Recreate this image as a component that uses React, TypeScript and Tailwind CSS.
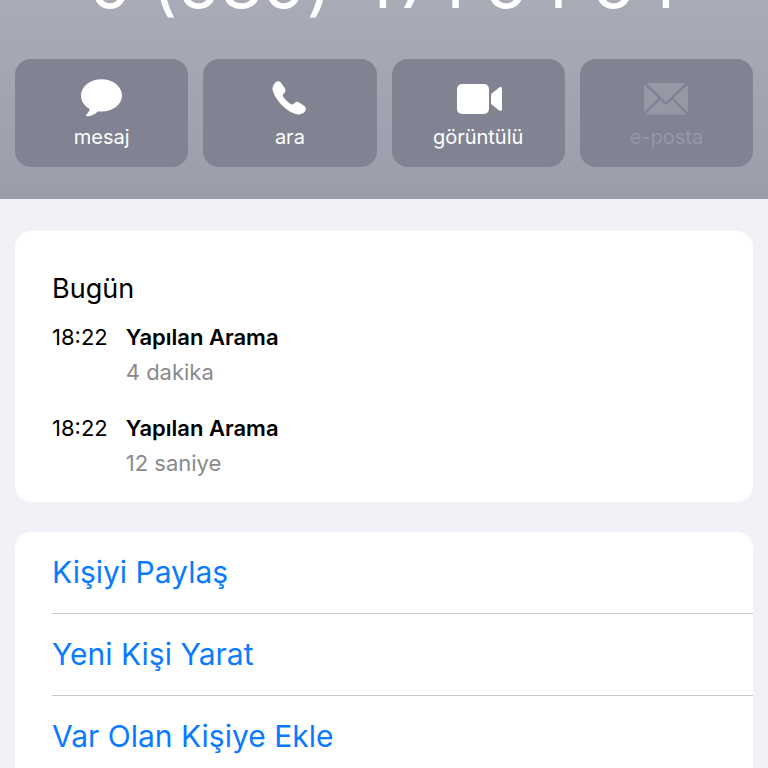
import type { ReactNode } from "react";

type Action = { label: string; icon: ReactNode; disabled?: boolean };

const actions: Action[] = [
  {
    label: "mesaj",
    icon: (
      <svg className="w-12 h-10" viewBox="0 0 48 40" fill="currentColor" aria-hidden="true">
        <path d="M23.500.300C12 .300 3 7.500 3 16.600c0 5.600 3.200 10.400 8.600 13.400-.3 2-1.300 3.500-2.900 5.200-.9.900-.5 2.100.9 2.100 3.200 0 7-1.900 9.700-4.300.4-.4.700-.4 1.200-.4h3C35 32.600 44 25.600 44 16.600S35 .300 23.500.300z" />
      </svg>
    ),
  },
  {
    label: "ara",
    icon: (
      <svg className="w-12 h-10" viewBox="0 0 48 40" fill="currentColor" aria-hidden="true">
        <path d="M8.800 4.200C10.800 1.700 13.500 1.700 15.200 4.100l3.500 5c1.200 1.800 1 3.300-.3 4.800l-1.200 1.400c-.6.700-.6 1.300-.1 2.100 1 1.500 2.200 2.900 3.600 4.300s2.800 2.600 4.400 3.500c.8.500 1.400.5 2.100-.1l1.400-1.200c1.500-1.300 3-1.500 4.700-.3l4.900 3.400c2.300 1.600 2.400 4.100.1 6.300-2.400 2.300-5.700 2.700-9.500 1.400-4.800-1.700-9.300-4.900-13.100-8.700S8.900 17.700 7.200 13c-1.300-3.600-.6-6.300 1.600-8.800z" />
      </svg>
    ),
  },
  {
    label: "görüntülü",
    icon: (
      <svg className="w-12 h-10" viewBox="0 0 48 40" fill="currentColor" aria-hidden="true">
        <rect x="3" y="5" width="32" height="30" rx="5" />
        <path d="M37 16.500c0-1 .3-1.700 1-2.300l7.200-5.700c1.300-1 2.800-.4 2.800 1.200v20.600c0 1.600-1.500 2.200-2.800 1.200L38 25.800c-.7-.6-1-1.300-1-2.300z" />
      </svg>
    ),
  },
  {
    label: "e-posta",
    disabled: true,
    icon: (
      <svg className="w-12 h-10" viewBox="0 0 48 40" fill="currentColor" aria-hidden="true">
        <path d="M4.500 4h39L25.300 22c-.8.800-1.800.8-2.600 0z" />
        <path d="M2 5.500 16.500 19.300 2 33.500zM46 5.500 31.500 19.300 46 33.500z" />
        <path d="M18 20.800l3.300 3.200c1.700 1.600 3.700 1.600 5.400 0l3.300-3.200L44.500 35.500h-41z" />
      </svg>
    ),
  },
];

const calls = [
  { time: "18:22", type: "Yapılan Arama", duration: "4 dakika" },
  { time: "18:22", type: "Yapılan Arama", duration: "12 saniye" },
];

const links = ["Kişiyi Paylaş", "Yeni Kişi Yarat", "Var Olan Kişiye Ekle"];

export default function App() {
  return (
    <div className="min-h-screen overflow-hidden bg-[#f2f1f7] font-['Inter','Liberation_Sans',sans-serif] text-black">
      {/* Contact header */}
      <header className="overflow-hidden bg-linear-to-b from-[#a9abb6] to-[#9b9dab] px-[15px] pb-8">
        <h1 className="-mt-[53px] mb-10 text-center text-[70px] leading-[72px] whitespace-nowrap text-white [font-feature-settings:'calt'_0]">
          0 (539) 471 54 54
        </h1>

        <div className="grid grid-cols-4 gap-[15px]">
          {actions.map((action) => (
            <button
              key={action.label}
              type="button"
              disabled={action.disabled}
              className="flex h-[108px] flex-col items-center gap-1 rounded-2xl bg-[#818393] pt-5 text-white disabled:text-[#9698a6]"
            >
              {action.icon}
              <span className="text-xl leading-7">{action.label}</span>
            </button>
          ))}
        </div>
      </header>

      <main className="flex flex-col gap-[30px] px-[15px] pt-8">
        {/* Recent calls */}
        <section className="rounded-2xl bg-white px-[37px] pt-10 pb-[21px]">
          <h2 className="text-[27px] leading-9">Bugün</h2>
          <ul className="mt-[13px] flex flex-col gap-[21px]">
            {calls.map((call) => (
              <li key={call.duration} className="flex gap-[18px] text-[22px] leading-[35px]">
                <time>{call.time}</time>
                <div>
                  <p className="font-semibold">{call.type}</p>
                  <p className="text-[#8a8a8e]">{call.duration}</p>
                </div>
              </li>
            ))}
          </ul>
        </section>

        {/* Contact actions */}
        <nav className="divide-y divide-[#c8c8cb] rounded-t-2xl bg-white pl-[37px]">
          {links.map((link) => (
            <a key={link} href="#" className="block py-5 text-[30px] leading-[41px] text-[#0a7aff]">
              {link}
            </a>
          ))}
        </nav>
      </main>
    </div>
  );
}
